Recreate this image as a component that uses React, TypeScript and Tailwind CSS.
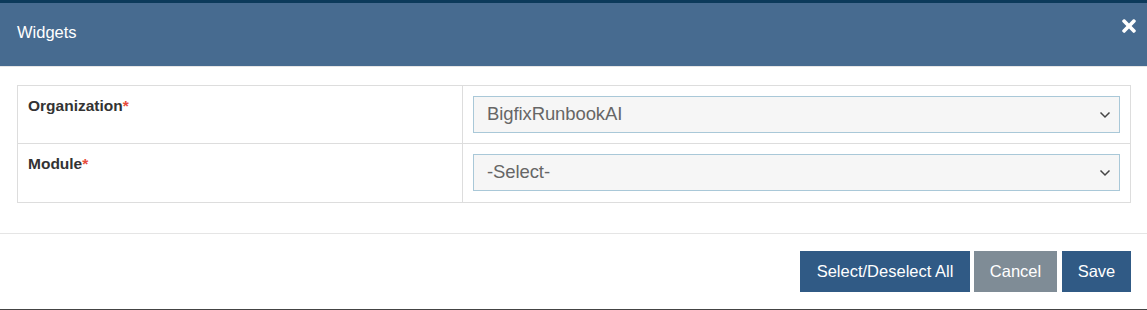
import React from "react";
import { FaTimes } from "react-icons/fa";

function Chevron() {
  return (
    <svg width="12" height="8" viewBox="0 0 12 8" className="shrink-0">
      <path d="M1.5 1.5 L6 6 L10.5 1.5" fill="none" stroke="#444" strokeWidth="1.5" />
    </svg>
  );
}

function SelectBox({ value }: { value: string }) {
  return (
    <div className="h-[37px] border border-[#a9c8d8] bg-[#f6f6f6] flex items-center justify-between pl-[13px] pr-[8px] text-[#666]">
      <span className="text-[18.5px] leading-none tracking-[-0.1px] pb-[1px]">{value}</span>
      <Chevron />
    </div>
  );
}

function Row({ label, value, last }: { label: string; value: string; last?: boolean }) {
  return (
    <div className={"flex h-[58px] " + (last ? "" : "border-b border-[#dddddd]")}>
      <div className="w-[445px] border-r border-[#dddddd] pl-[10px] pt-[8px] text-[15.5px] font-bold text-[#333]">
        {label}
        <span className="text-[#e74c3c]">*</span>
      </div>
      <div className="flex-1 px-[10px] pt-[10px]">
        <SelectBox value={value} />
      </div>
    </div>
  );
}

export default function App() {
  return (
    <div
      className="w-[1147px] h-[310px] bg-white overflow-hidden flex flex-col"
      style={{ fontFamily: '"Liberation Sans", Arial, sans-serif' }}
    >
      <div className="h-[3px] bg-[#0c3a5b]" />
      <div className="h-[63px] bg-[#476b90] flex justify-between pl-[17px] pr-[8px] border-b border-[#e6e6e6] box-content">
        <div className="text-white text-[16.5px] pt-[17px]">Widgets</div>
        <div className="pt-[13px] text-white">
          <FaTimes size={20} />
        </div>
      </div>
      <div className="pl-[17px] pr-[16px] pt-[18px]">
        <div className="border border-[#dddddd]">
          <Row label="Organization" value="BigfixRunbookAI" />
          <Row label="Module" value="-Select-" last />
        </div>
      </div>
      <div className="mt-[30px] border-t border-[#e5e5e5] flex justify-end gap-[4px] pr-[16px] pt-[17px]">
        <button className="h-[41px] w-[170px] bg-[#305a85] text-white text-[16.5px]">Select/Deselect All</button>
        <button className="h-[41px] w-[83px] bg-[#7f8c96] text-white text-[16.5px]">Cancel</button>
        <button className="h-[41px] w-[69px] ml-[1px] bg-[#305a85] text-white text-[16.5px]">Save</button>
      </div>
      <div className="flex-1" />
      <div className="h-[1px] bg-[#444]" />
    </div>
  );
}
